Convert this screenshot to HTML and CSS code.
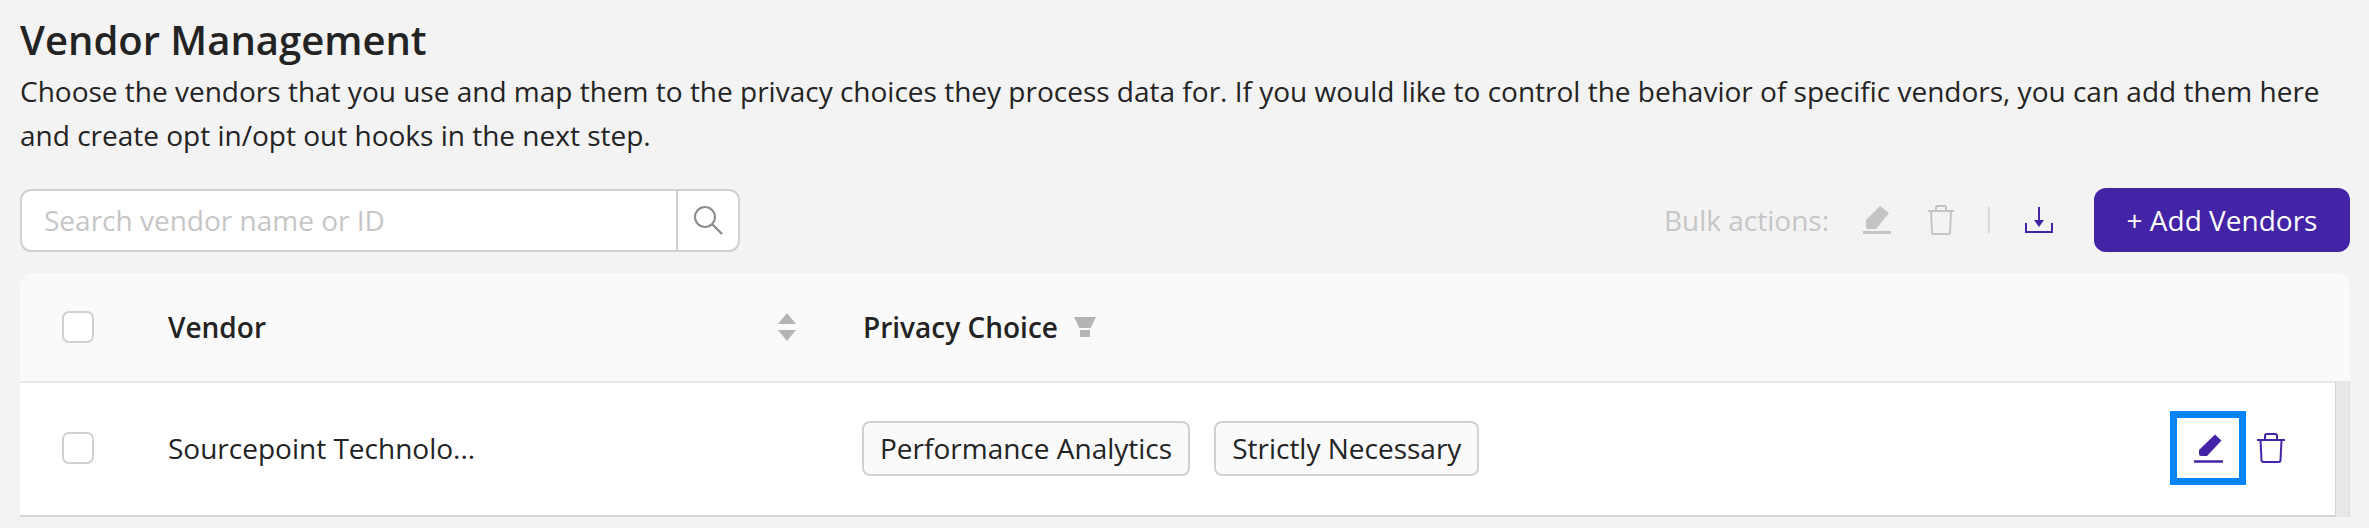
FILE: index.html
```html
<!DOCTYPE html>
<html lang="en">
<head>
<meta charset="utf-8">
<title>Vendor Management</title>
<link rel="stylesheet" href="styles.css">
</head>
<body>
<main class="page">
  <h1 class="title">Vendor Management</h1>
  <p class="desc">Choose the vendors that you use and map them to the privacy choices they process data for. If you would like to control the behavior of specific vendors, you can add them here and create opt in/opt out hooks in the next step.</p>
  <div class="toolbar">
    <div class="search">
      <input class="search-input" type="text" placeholder="Search vendor name or ID">
      <span class="search-btn">
        <svg class="i-search" viewBox="0 0 30 30"><circle cx="12" cy="12" r="10" fill="none" stroke="#8c8c8c" stroke-width="2"/><path d="M19 19l10 10" stroke="#8c8c8c" stroke-width="2.4" fill="none"/></svg>
      </span>
    </div>
    <div class="actions">
      <span class="bulk-label">Bulk actions:</span>
      <svg class="i-pencil" viewBox="0 0 30 30"><path d="M18 1l9 7-13 16H6a2 2 0 0 1-2-2v-7z" fill="#c4c4c4"/><path d="M1 27.500h28" stroke="#c4c4c4" stroke-width="3"/></svg>
      <svg class="i-trash" viewBox="0 0 28 30"><path d="M1 6h26M9 6V2.500A1.500 1.500 0 0 1 10.500 1h7A1.500 1.500 0 0 1 19 2.500V6M4 6l1 21.500A1.500 1.500 0 0 0 6.500 29h15a1.500 1.500 0 0 0 1.500-1.500L24 6" fill="none" stroke="#c4c4c4" stroke-width="2"/></svg>
      <span class="divider"></span>
      <svg class="i-download" viewBox="0 0 28 26"><path d="M14 0v15" stroke="#4324a6" stroke-width="2"/><path d="M9 13h10l-5 7z" fill="#4324a6"/><path d="M1 16v9h26v-9" fill="none" stroke="#4324a6" stroke-width="2"/></svg>
      <button class="add-btn" type="button">+ Add Vendors</button>
    </div>
  </div>
  <section class="table">
    <div class="grid head">
      <span class="check"></span>
      <span class="col-vendor"><b>Vendor</b>
        <svg class="i-sort" viewBox="0 0 18 28"><path d="M9 0l9 11H0z" fill="#b4b4b4"/><path d="M0 17h18l-9 11z" fill="#b4b4b4"/></svg>
      </span>
      <span class="col-choice"><b>Privacy Choice</b>
        <svg class="i-filter" viewBox="0 0 22 20"><path d="M0 0h22l-5.500 11h-11z" fill="#b4b4b4"/><rect x="6" y="13" width="10" height="7" fill="#b4b4b4"/></svg>
      </span>
    </div>
    <div class="body-wrap">
      <div class="grid row">
        <span class="check"></span>
        <span class="vendor-name">Sourcepoint Technolo...</span>
        <span class="chips"><span class="chip">Performance Analytics</span><span class="chip">Strictly Necessary</span></span>
        <span class="row-actions">
          <span class="focus-box">
            <svg class="i-pencil-row" viewBox="0 0 29 29"><path d="M21 .5l6.500 6L13 22H7a2 2 0 0 1-2-2v-4z" fill="#4324a6"/><path d="M0 27.500h29" stroke="#4324a6" stroke-width="2.500"/></svg>
          </span>
          <svg class="i-trash-row" viewBox="0 0 28 30"><path d="M0 7h28M8 7V3a2 2 0 0 1 2-2h8a2 2 0 0 1 2 2v4M3.500 7l1 20a2 2 0 0 0 2 2h15a2 2 0 0 0 2-2l1-20" fill="none" stroke="#4324a6" stroke-width="2"/></svg>
        </span>
      </div>
      <div class="scrolltrack"></div>
    </div>
  </section>
</main>
</body>
</html>
```
FILE: styles.css
```css
* { box-sizing: border-box; }
html, body { margin: 0; height: 100%; }
body {
  background: #f3f3f3;
  color: #232323;
  font-family: "Open Sans", "Liberation Sans", sans-serif;
  font-size: 28px;
  overflow: hidden;
}
.page { padding: 17px 19px 0 20px; }
.title {
  margin: 0;
  font-size: 40px;
  font-weight: 600;
  line-height: 46px;
}
.desc {
  margin: 6px 0 0;
  line-height: 44px;
}
.toolbar {
  display: flex;
  justify-content: space-between;
  align-items: center;
  margin-top: 31px;
  height: 64px;
}
.search {
  display: flex;
  width: 720px;
  height: 63px;
  background: #fff;
  border: 2px solid #ccd2d6;
  border-radius: 11px;
}
.search-input {
  flex: 1;
  min-width: 0;
  border: 0;
  outline: 0;
  background: transparent;
  padding: 0 0 0 22px;
  font: inherit;
  border-radius: 11px 0 0 11px;
}
.search-input::placeholder { color: #c6c6c6; opacity: 1; }
.search-btn {
  display: flex;
  align-items: center;
  justify-content: center;
  width: 62px;
  border-left: 2px solid #ccd2d6;
}
.i-search { width: 30px; height: 30px; }
.actions { display: flex; align-items: center; }
.bulk-label { color: #c6c6c6; margin-right: 33px; }
.i-pencil { width: 30px; height: 30px; margin-right: 35px; }
.i-trash { width: 28px; height: 30px; }
.divider { width: 2px; height: 26px; background: #d8d8d8; margin: 0 35px 0 33px; }
.i-download { width: 28px; height: 26px; margin-right: 41px; }
.add-btn {
  width: 256px;
  height: 64px;
  border: 0;
  border-radius: 12px;
  background: #4324a6;
  color: #fff;
  font: inherit;
  font-weight: 500;
}
.table { margin-top: 21px; }
.grid {
  display: grid;
  grid-template-columns: 148px 695px 1fr auto;
  align-items: center;
}
.head {
  height: 110px;
  background: #fafafa;
  border-bottom: 2px solid #e4e6e8;
  border-radius: 14px 14px 0 0;
}
.check {
  width: 32px;
  height: 32px;
  margin-left: 42px;
  background: #fff;
  border: 2px solid #ccd2d6;
  border-radius: 7px;
}
.col-vendor { display: flex; align-items: center; justify-content: space-between; padding-right: 67px; }
.col-vendor b, .col-choice b { font-weight: 600; }
.i-sort { width: 18px; height: 28px; }
.col-choice { display: flex; align-items: center; gap: 16px; }
.i-filter { width: 22px; height: 20px; }
.body-wrap { display: flex; height: 134px; }
.row {
  flex: 1;
  background: #fff;
  border-bottom: 2px solid #d0d5d9;
  padding-bottom: 2px;
}
.chips { display: flex; gap: 24px; margin-left: -1px; grid-column: 3; }
.chip {
  display: flex;
  align-items: center;
  height: 55px;
  padding: 0 16px;
  background: #fafafa;
  border: 2px solid #ccd2d6;
  border-radius: 8px;
}
.row-actions { display: flex; align-items: center; gap: 11px; padding-right: 50px; }
.focus-box {
  display: flex;
  align-items: center;
  justify-content: center;
  width: 76px;
  height: 74px;
  background: #fff;
  border: 7px solid #0084ff;
}
.i-pencil-row { width: 29px; height: 29px; }
.i-trash-row { width: 28px; height: 30px; }
.scrolltrack {
  width: 15px;
  margin-top: -2px;
  background: #e8e8e8;
  border-left: 1px solid #d4d4d4;
  border-right: 1px solid #dcdcdc;
}
```
